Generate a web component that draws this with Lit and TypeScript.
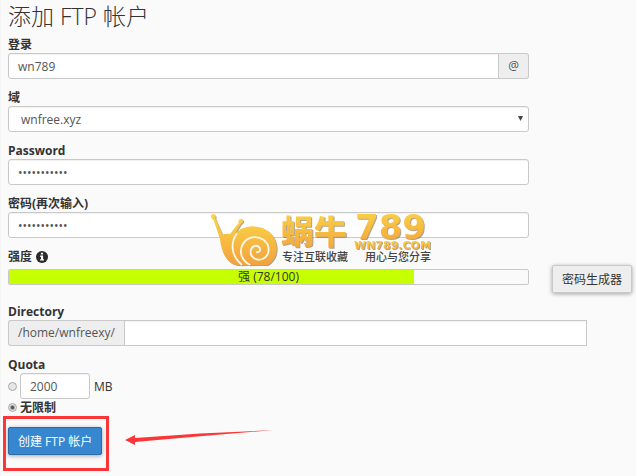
import { LitElement, html, css, svg } from "lit";
import { customElement } from "lit/decorators.js";

const infoIcon = html`<svg class="info" viewBox="0 0 12 12" aria-hidden="true">
  <circle cx="6" cy="6" r="6" fill="#2b2b2b" />
  <path d="M4.9 1.8h2.2v1.7H4.9zM4.2 4.6h2.9v3.6h.9v1.4H4.1V8.2h.9V6h-.8z" fill="#fff" />
</svg>`;

const snail = svg`
  <defs>
    <linearGradient id="gold" x1="0" y1="0" x2="0" y2="1">
      <stop offset="0" stop-color="#fbd746" />
      <stop offset="1" stop-color="#f3a23d" />
    </linearGradient>
  </defs>
  <path fill="url(#gold)" d="M2.4 0.2C4.8-0.4 6.3 1.8 5.3 4.2L12.6 20.4C15 19.6 17.5 19.6 19.8 20.2L28.6 9C27.8 6.6 29.6 4.6 31.4 5C33.8 5.6 33.6 8.9 31 9.8L24.4 20.6C29.4 14.8 36.4 12 44.5 12.4C58 13 67 23 66.7 34.5C66.4 42 63 48 57.4 51H27C16 49 11.6 38 9.8 24.6L3.4 5.4C0.6 4.6 0.2 1 2.4 0.2Z" />
  <path fill="none" stroke="#faf6ea" stroke-width="1.8" stroke-linecap="round" d="M26.5 20C20 29.500 21.500 42 31.500 50.500M39.500 50.500C31.500 46.500 28.800 37.500 32.600 30.500C36.800 23 46.500 20.800 53.500 25.800C60.500 31 60.500 41 53 44.800C47 47.600 40.400 43.600 40.600 37.600C40.800 32.600 45.800 30.200 49 33C51.400 35.400 49.600 38.800 46.800 38.200" />`;

@customElement("app-root")
export class AppRoot extends LitElement {
  static styles = css`
    :host {
      display: block;
      position: relative;
      box-sizing: border-box;
      min-height: 100vh;
      overflow: hidden;
      padding: 0 0 16px 7px;
      background: #fafafa;
      border-left: 1px solid #f4f4f4;
      border-right: 1px solid #fff;
      font: 12px/17px "Open Sans", "Noto Sans CJK SC", sans-serif;
      color: #333;
    }
    * { box-sizing: border-box; }
    h1 {
      margin: 0;
      padding-top: 2px;
      font-size: 23px;
      line-height: 28px;
      font-weight: 300;
      height: 36px;
    }
    input, select, button { font: inherit; color: #555; margin: 0; }
    .group { margin: 0 107px 10px 0; }
    .group.wide { margin-right: 49px; }
    .label { display: block; font-weight: 700; line-height: 17px; white-space: nowrap; }
    .box {
      display: block;
      width: 100%;
      height: 26px;
      padding: 0 9px;
      border: 1px solid #c9c9c9;
      border-radius: 3px;
      background: #fff;
      box-shadow: inset 0 1px 1px rgba(0, 0, 0, 0.06);
      outline: none;
    }
    .joined { display: flex; }
    .joined .box { flex: 1; min-width: 0; }
    .joined .before { border-radius: 3px 0 0 3px; }
    .joined .after { border-radius: 0; }
    .addon {
      height: 26px;
      padding: 0 9px;
      line-height: 24px;
      border: 1px solid #c9c9c9;
      background: #eee;
      color: #555;
    }
    .addon.right { border-left: 0; border-radius: 0 3px 3px 0; }
    .addon.left { border-right: 0; border-radius: 3px 0 0 3px; }
    .select { position: relative; }
    .select .box { appearance: none; padding: 0 12px; }
    .caret {
      position: absolute;
      right: 6px;
      top: 10px;
      width: 5px;
      height: 5px;
      background: #444;
      clip-path: polygon(0 0, 100% 0, 50% 100%);
      pointer-events: none;
    }
    .strength-label { display: flex; align-items: center; gap: 4px; height: 17px; font-weight: 700; }
    .info { width: 12px; height: 12px; }
    .strength { display: flex; gap: 23px; padding-right: 4px; margin-bottom: 10px; }
    .meter {
      position: relative;
      flex: 1;
      height: 16px;
      margin-top: 4px;
      border: 1px solid #c9c9c9;
      border-radius: 2px;
      text-align: center;
      line-height: 14px;
    }
    .fill { position: absolute; inset: 0 auto 0 0; background: #c6ff00; }
    .meter-text { position: relative; }
    .btn {
      height: 28px;
      padding: 0 9px;
      border: 1px solid #c9c9c9;
      border-radius: 2px;
      background: #eee;
      color: #333;
      white-space: nowrap;
      box-shadow: 0 1px 4px rgba(0, 0, 0, 0.35);
    }
    .btn.primary { background: #3787d0; border-color: #2a6cab; color: #fff; }
    .quota { display: flex; align-items: center; }
    .quota .box { width: 70px; margin: 0 4px 0 3px; }
    input[type="radio"] {
      appearance: none;
      width: 9px;
      height: 9px;
      border: 1px solid #aaa;
      border-radius: 50%;
      background: #e6e6e6;
    }
    input[type="radio"]:checked { background: radial-gradient(circle, #555 1px, #e6e6e6 3px); }
    .unlimited { display: flex; align-items: center; gap: 3px; height: 16px; font-weight: 700; margin-bottom: 12px; }
    .submit { position: relative; width: max-content; }
    .frame {
      position: absolute;
      inset: -11px -7px -16px -5px;
      border: 3px solid #fc3636;
      pointer-events: none;
    }
    .arrow {
      position: absolute;
      left: calc(100% + 23px);
      top: 2px;
      width: 150px;
      height: 18px;
      pointer-events: none;
    }
    .watermark {
      position: absolute;
      left: 209px;
      top: 214px;
      width: 226px;
      height: 54px;
      pointer-events: none;
      overflow: visible;
    }
    .art { filter: drop-shadow(1px 1px 0 rgba(105, 90, 60, 0.55)); }
    .brand { font: 900 33px "Noto Sans CJK SC", sans-serif; }
    .digits { font: 700 34px "DejaVu Sans", sans-serif; }
    .site { font: 700 11px "DejaVu Sans", sans-serif; }
    .slogan { font: 500 11px "Noto Sans CJK SC", sans-serif; fill: #444; }
  `;

  render() {
    return html`
      <h1>添加 FTP 帐户</h1>
      <div class="group">
        <label class="label" for="login">登录</label>
        <div class="joined">
          <input class="box before" id="login" value="wn789" /><span class="addon right">@</span>
        </div>
      </div>
      <div class="group">
        <label class="label" for="domain">域</label>
        <div class="select">
          <select class="box" id="domain"><option>wnfree.xyz</option></select>
          <span class="caret"></span>
        </div>
      </div>
      <div class="group">
        <label class="label" for="pass">Password</label>
        <input class="box" id="pass" type="password" value="abcdefghijk" />
      </div>
      <div class="group">
        <label class="label" for="again">密码(再次输入)</label>
        <input class="box" id="again" type="password" value="abcdefghijk" />
      </div>
      <div class="strength-label">强度 ${infoIcon}</div>
      <div class="strength">
        <div class="meter">
          <div class="fill" style="width:78%"></div>
          <span class="meter-text">强 (78/100)</span>
        </div>
        <button class="btn" type="button">密码生成器</button>
      </div>
      <div class="group wide">
        <label class="label" for="dir">Directory</label>
        <div class="joined">
          <span class="addon left">/home/wnfreexy/</span><input class="box after" id="dir" />
        </div>
      </div>
      <div class="label" id="quota">Quota</div>
      <div class="quota" role="group" aria-labelledby="quota">
        <input type="radio" name="quota" id="limited" aria-label="MB" />
        <input class="box" id="amount" value="2000" />
        <label for="amount">MB</label>
      </div>
      <div class="unlimited">
        <input type="radio" name="quota" id="none" checked />
        <label for="none">无限制</label>
      </div>
      <div class="submit">
        <button class="btn primary" type="submit">创建 FTP 帐户</button>
        <span class="frame"></span>
        <svg class="arrow" viewBox="0 0 150 18" aria-hidden="true">
          <path d="M0 11L10 6V9L75 4.6L149 1L75 7.2L10 13V16Z" fill="#fc3636" />
        </svg>
      </div>
      <svg class="watermark" viewBox="0 0 226 54">
        <g class="art">
          ${snail}
          <g fill="url(#gold)">
            <text class="brand" x="71" y="30">蜗牛</text>
            <text class="digits" x="145" y="25">789</text>
            <text class="site" x="144" y="35">WN789.COM</text>
          </g>
        </g>
        <text class="slogan" x="72" y="47">专注互联收藏</text>
        <text class="slogan" x="155" y="47">用心与您分享</text>
      </svg>
    `;
  }
}
